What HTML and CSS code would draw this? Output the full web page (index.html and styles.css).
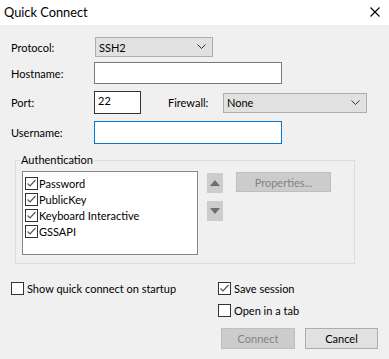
FILE: index.html
```html
<!DOCTYPE html>
<html lang="en">
<head>
    <meta charset="UTF-8">
    <title>Quick Connect</title>
    <link rel="stylesheet" href="styles.css">
</head>
<body>
    <div class="titlebar">
        <span class="title">Quick Connect</span>
        <svg class="close" width="10" height="10" viewBox="0 0 10 10"><path d="M0.5 0.5L9.5 9.5M9.5 0.5L0.5 9.5" stroke="#000" stroke-width="1.1"/></svg>
    </div>
    <div class="dialog">
        <div class="row row-protocol">
            <label class="lbl">Protocol:</label>
            <div class="combo combo-protocol">
                <span>SSH2</span>
                <svg width="9" height="6" viewBox="0 0 9 6"><path d="M0.5 0.5L4.5 4.5L8.5 0.5" fill="none" stroke="#333" stroke-width="1"/></svg>
            </div>
        </div>
        <div class="row row-host">
            <label class="lbl">Hostname:</label>
            <div class="field field-wide"></div>
        </div>
        <div class="row row-port">
            <label class="lbl">Port:</label>
            <div class="field field-port">22</div>
            <label class="lbl-firewall">Firewall:</label>
            <div class="combo combo-firewall">
                <span>None</span>
                <svg width="9" height="6" viewBox="0 0 9 6"><path d="M0.5 0.5L4.5 4.5L8.5 0.5" fill="none" stroke="#333" stroke-width="1"/></svg>
            </div>
        </div>
        <div class="row row-user">
            <label class="lbl">Username:</label>
            <div class="field field-wide focused"></div>
        </div>

        <div class="group">
            <div class="group-title">Authentication</div>
            <div class="group-body">
                <div class="listbox">
                    <div class="item"><span class="check on"></span>Password</div>
                    <div class="item"><span class="check on"></span>PublicKey</div>
                    <div class="item"><span class="check on"></span>Keyboard Interactive</div>
                    <div class="item"><span class="check on"></span>GSSAPI</div>
                </div>
                <div class="arrows">
                    <div class="arrow-btn"><svg width="10" height="6" viewBox="0 0 10 6"><path d="M5 0L10 6H0Z" fill="#6d6d6d"/></svg></div>
                    <div class="arrow-btn"><svg width="10" height="6" viewBox="0 0 10 6"><path d="M0 0H10L5 6Z" fill="#6d6d6d"/></svg></div>
                </div>
                <div class="btn disabled btn-props">Properties...</div>
            </div>
        </div>

        <div class="options">
            <div class="opt"><span class="box"></span>Show quick connect on startup</div>
            <div class="opt"><span class="box on"></span>Save session</div>
            <div></div>
            <div class="opt"><span class="box"></span>Open in a tab</div>
        </div>

        <div class="buttons">
            <div class="btn disabled">Connect</div>
            <div class="btn">Cancel</div>
        </div>
    </div>
</body>
</html>
```

FILE: styles.css
```css
body, html {
    margin: 0;
    padding: 0;
    font-family: Lato, "Liberation Sans", sans-serif;
    font-size: 11px;
    color: #000;
}
body {
    width: 389px;
    height: 359px;
    overflow: hidden;
    background: #f0f0f0;
}
.titlebar {
    height: 25px;
    background: #fff;
    display: flex;
    align-items: center;
    justify-content: space-between;
    padding: 0 9px 0 4px;
}
.title {
    font-size: 12.8px;
    margin-top: -1px;
}
.close {
    margin-top: -1px;
}
.dialog {
    padding: 12px 11px 0 11px;
}
.row {
    display: flex;
    align-items: center;
}
.row-host {
    margin-top: 5px;
}
.row-port {
    margin-top: 7px;
}
.row-user {
    margin-top: 7px;
}
.lbl {
    width: 83px;
    flex: none;
}
.lbl-firewall {
    margin-left: 27px;
    width: 55px;
}
.combo {
    height: 20px;
    box-sizing: border-box;
    background: #e1e1e1;
    border: 1px solid #adadad;
    display: flex;
    align-items: center;
    justify-content: space-between;
    padding: 0 6px 0 3px;
}
.combo-protocol {
    width: 118px;
    margin-left: 1px;
}
.combo-firewall {
    width: 144px;
}
.field {
    height: 23px;
    box-sizing: border-box;
    background: #fff;
    border: 1px solid #7a7a7a;
}
.field-wide {
    width: 188px;
    height: 22px;
}
.row-user .field-wide {
    height: 23px;
}
.focused {
    border-color: #0078d7;
}
.field-port {
    width: 47px;
    border-color: #333;
    padding: 1px 0 0 3px;
    line-height: 16px;
}

.group {
    margin: 16px 0 0 4px;
    width: 340px;
    height: 104px;
    box-sizing: border-box;
    border: 1px solid #dcdcdc;
}
.group-title {
    width: fit-content;
    margin: -8px 0 0 4px;
    padding: 0 1px;
    background: #f0f0f0;
    line-height: 14px;
}
.group-body {
    display: flex;
    align-items: flex-start;
    padding: 4px 0 0 6px;
}
.listbox {
    width: 176px;
    height: 84px;
    box-sizing: border-box;
    background: #fff;
    border: 1px solid #828790;
    padding: 3px 0 0 2px;
}
.item {
    display: flex;
    align-items: center;
    height: 16px;
}
.check {
    width: 13px;
    height: 13px;
    box-sizing: border-box;
    border: 1px solid #333;
    margin-right: 1px;
    background: #fff;
}
.check.on, .box.on {
    background: #fff url("data:image/svg+xml,%3Csvg xmlns='http://www.w3.org/2000/svg' width='11' height='11'%3E%3Cpath d='M1.5 5.5L4 8L9.5 2' fill='none' stroke='%23555' stroke-width='1.2'/%3E%3C/svg%3E") no-repeat center;
}
.arrows {
    display: flex;
    flex-direction: column;
    gap: 8px;
    margin: 2px 0 0 9px;
}
.arrow-btn {
    width: 16px;
    height: 20px;
    background: #cccccc;
    display: flex;
    align-items: center;
    justify-content: center;
}
.btn {
    height: 21px;
    box-sizing: border-box;
    background: #e1e1e1;
    border: 1px solid #adadad;
    display: flex;
    align-items: center;
    justify-content: center;
}
.btn.disabled {
    background: #cccccc;
    border-color: #bfbfbf;
    color: #838383;
}
.btn-props {
    width: 95px;
    height: 20px;
    margin: 1px 0 0 13px;
}

.options {
    display: grid;
    grid-template-columns: 207px auto;
    row-gap: 9px;
    margin-top: 18px;
}
.opt {
    display: flex;
    align-items: center;
    height: 13px;
}
.box {
    width: 13px;
    height: 13px;
    box-sizing: border-box;
    border: 1px solid #333;
    background: #fff;
    margin-right: 3px;
}
.buttons {
    display: flex;
    justify-content: flex-end;
    gap: 10px;
    margin-top: 11px;
}
.buttons .btn {
    width: 73px;
}
.buttons .btn.disabled {
    width: 74px;
}
```
